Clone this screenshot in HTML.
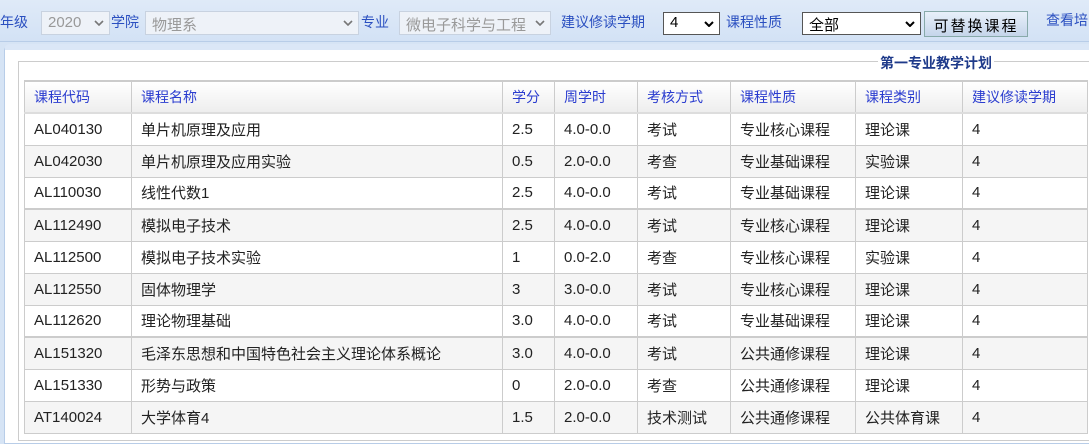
<!DOCTYPE html>
<html><head><meta charset="utf-8"><style>
*{margin:0;padding:0;box-sizing:border-box}
body{width:1089px;height:439px;overflow:hidden;background:#d6e4f5;font-family:"Liberation Sans","Noto Sans CJK SC",sans-serif;font-size:14px;position:relative}
.bar{position:absolute;left:0;top:0;width:1089px;height:42px;background:linear-gradient(#dfeaf8,#d3e2f5);border-bottom:1px solid #b8cde8}
.bar span,.bar div{position:absolute;top:12px;white-space:nowrap}
.lbl{color:#2a4fc0}
.sel{position:absolute;top:11px!important;height:24px;border:1px solid #c8d2e0;background:#eef2f8;color:#999;padding:2px 6px;font-size:15px}
.sel2{position:absolute;top:12px!important;height:23px;border:1px solid #555;background:#fff;color:#000;padding:1px 6px;font-size:15px}
.arr{position:absolute;right:5px;top:8px;width:10px;height:6px}
.btn{position:absolute;top:11px!important;left:924px;width:104px;height:26px;border:1px solid #8aa;background:linear-gradient(#e8f0fa,#c5d5ea);font-size:15px;letter-spacing:2px;text-align:center;padding-top:3px}
.panel{position:absolute;left:4px;top:44px;width:1090px;height:400px;background:#fff;border:1px solid #b8cde8;border-radius:6px 0 0 0;border-top:6px solid #dbe7f7}
.inner{position:absolute;left:18px;top:61px;width:1080px;height:380px;border:1px solid #ccc;border-right:none}
.legend{position:absolute;left:878px;top:53px;font-weight:bold;color:#1e3a8a;background:#fff;padding:0 2px;font-size:14px}
table{position:absolute;left:24px;top:80px;border-collapse:collapse;table-layout:fixed}
td,th{border:1px solid #ccc;height:32px;padding:0 9px;text-align:left;font-weight:normal;white-space:nowrap;overflow:hidden;color:#222;font-size:15px}
th{color:#2a3ccf;background:linear-gradient(#fff,#eee);border-top:2px solid #ccc;border-bottom:2px solid #ddd;font-size:14px}
tr:nth-child(odd) td{background:#f5f5f5}
tr.t td{border-top:2px solid #ccc}
</style></head><body>
<div class="bar">
<span class="lbl" style="left:0">年级</span>
<div class="sel" style="left:41px;width:69px">2020<svg class="arr" viewBox="0 0 10 6"><path d="M1 1L5 5L9 1" stroke="#777" stroke-width="1.6" fill="none"/></svg></div>
<span class="lbl" style="left:111px">学院</span>
<div class="sel" style="left:145px;width:214px">物理系<svg class="arr" viewBox="0 0 10 6"><path d="M1 1L5 5L9 1" stroke="#777" stroke-width="1.6" fill="none"/></svg></div>
<span class="lbl" style="left:361px">专业</span>
<div class="sel" style="left:399px;width:152px">微电子科学与工程<svg class="arr" viewBox="0 0 10 6"><path d="M1 1L5 5L9 1" stroke="#777" stroke-width="1.6" fill="none"/></svg></div>
<span class="lbl" style="left:561px">建议修读学期</span>
<div class="sel2" style="left:663px;width:57px">4<svg class="arr" viewBox="0 0 10 6"><path d="M1 1L5 5L9 1" stroke="#000" stroke-width="2" fill="none"/></svg></div>
<span class="lbl" style="left:726px">课程性质</span>
<div class="sel2" style="left:802px;width:119px">全部<svg class="arr" viewBox="0 0 10 6"><path d="M1 1L5 5L9 1" stroke="#000" stroke-width="2" fill="none"/></svg></div>
<div class="btn">可替换课程</div>
<span class="lbl" style="left:1046px;top:10px">查看培</span>
</div>
<div class="panel"></div>
<div class="inner"></div>
<div class="legend">第一专业教学计划</div>
<table>
<colgroup><col style="width:107px"><col style="width:371px"><col style="width:52px"><col style="width:83px"><col style="width:93px"><col style="width:125px"><col style="width:107px"><col style="width:125px"></colgroup>
<tr><th>课程代码</th><th>课程名称</th><th>学分</th><th>周学时</th><th>考核方式</th><th>课程性质</th><th>课程类别</th><th>建议修读学期</th></tr>
<tr><td>AL040130</td><td>单片机原理及应用</td><td>2.5</td><td>4.0-0.0</td><td>考试</td><td>专业核心课程</td><td>理论课</td><td>4</td></tr>
<tr><td>AL042030</td><td>单片机原理及应用实验</td><td>0.5</td><td>2.0-0.0</td><td>考查</td><td>专业基础课程</td><td>实验课</td><td>4</td></tr>
<tr><td>AL110030</td><td>线性代数1</td><td>2.5</td><td>4.0-0.0</td><td>考试</td><td>专业基础课程</td><td>理论课</td><td>4</td></tr>
<tr class="t"><td>AL112490</td><td>模拟电子技术</td><td>2.5</td><td>4.0-0.0</td><td>考试</td><td>专业核心课程</td><td>理论课</td><td>4</td></tr>
<tr><td>AL112500</td><td>模拟电子技术实验</td><td>1</td><td>0.0-2.0</td><td>考查</td><td>专业核心课程</td><td>实验课</td><td>4</td></tr>
<tr><td>AL112550</td><td>固体物理学</td><td>3</td><td>3.0-0.0</td><td>考试</td><td>专业核心课程</td><td>理论课</td><td>4</td></tr>
<tr><td>AL112620</td><td>理论物理基础</td><td>3.0</td><td>4.0-0.0</td><td>考试</td><td>专业基础课程</td><td>理论课</td><td>4</td></tr>
<tr class="t"><td>AL151320</td><td>毛泽东思想和中国特色社会主义理论体系概论</td><td>3.0</td><td>4.0-0.0</td><td>考试</td><td>公共通修课程</td><td>理论课</td><td>4</td></tr>
<tr><td>AL151330</td><td>形势与政策</td><td>0</td><td>2.0-0.0</td><td>考查</td><td>公共通修课程</td><td>理论课</td><td>4</td></tr>
<tr><td>AT140024</td><td>大学体育4</td><td>1.5</td><td>2.0-0.0</td><td>技术测试</td><td>公共通修课程</td><td>公共体育课</td><td>4</td></tr>
</table>
</body></html>
